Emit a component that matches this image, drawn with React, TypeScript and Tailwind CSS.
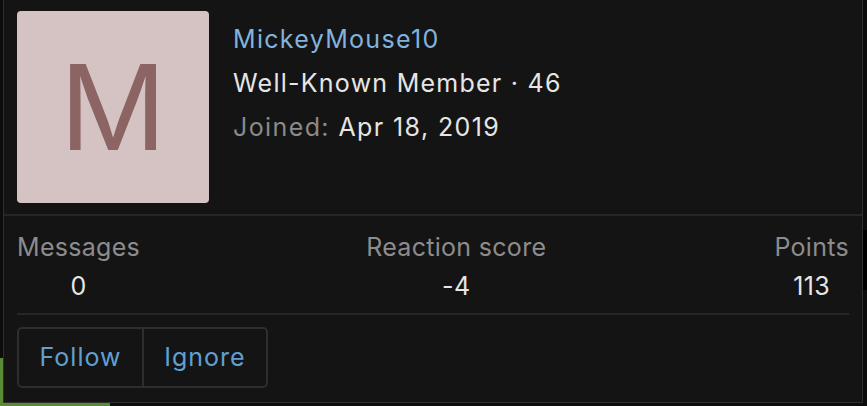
import React from "react";

export default function App() {
  const font = { fontFamily: 'Inter, "Noto Sans", sans-serif' };
  return (
    <div className="relative w-[867px] h-[406px] overflow-hidden bg-[#0c0c0c]" style={font}>
      {/* background page pieces under the popup */}
      <div className="absolute left-0 top-[358px] w-[110px] h-[48px] bg-[#5b8a36]" />
      <div className="absolute right-0 top-[230px] w-[5px] h-[60px] bg-[#000]" />

      {/* member tooltip card */}
      <div className="absolute left-[3px] top-[-2px] w-[860px] h-[405px] bg-[#141414] border border-[#2f2f2f] flex flex-col">
        <div className="flex pl-[13px] pt-[12px] pb-[11px] gap-[24px]">
          <div className="w-[192px] h-[192px] rounded-[4px] bg-[#d5c3c3] flex items-center justify-center text-[#8c6464] text-[118px] leading-none">
            M
          </div>
          <div className="pt-[6px] text-[25px] leading-[44px] tracking-[1.25px]">
            <div className="text-[#80b3df] tracking-[1.3px]">MickeyMouse10</div>
            <div className="text-[#e6e6e6]">Well-Known Member · 46</div>
            <div className="tracking-[1.4px]">
              <span className="text-[#8a8a8a]">Joined:</span>{" "}
              <span className="text-[#e6e6e6]">Apr 18, 2019</span>
            </div>
          </div>
        </div>
        <div className="h-[2px] bg-[#262626]" />
        <div className="mx-[13px] pt-[12px] pb-[7px] flex justify-between text-[25px] leading-[39px] tracking-[0.3px] border-b-2 border-[#262626]">
          <div className="flex flex-col items-center">
            <span className="text-[#8c8c8c]">Messages</span>
            <span className="text-[#e6e6e6]">0</span>
          </div>
          <div className="flex flex-col items-center pr-[2px]">
            <span className="text-[#8c8c8c]">Reaction score</span>
            <span className="text-[#e6e6e6]">-4</span>
          </div>
          <div className="flex flex-col items-center">
            <span className="text-[#8c8c8c]">Points</span>
            <span className="text-[#e6e6e6]">113</span>
          </div>
        </div>
        <div className="pl-[13px] pt-[12px]">
          <div className="inline-flex h-[61px] rounded-[5px] border-2 border-[#2e2e2e] text-[25px] tracking-[1px] text-[#5fa0d2]">
            <div className="flex items-center justify-center w-[125px] border-r-2 border-[#2e2e2e]">Follow</div>
            <div className="flex items-center justify-center w-[122px]">Ignore</div>
          </div>
        </div>
      </div>
    </div>
  );
}
